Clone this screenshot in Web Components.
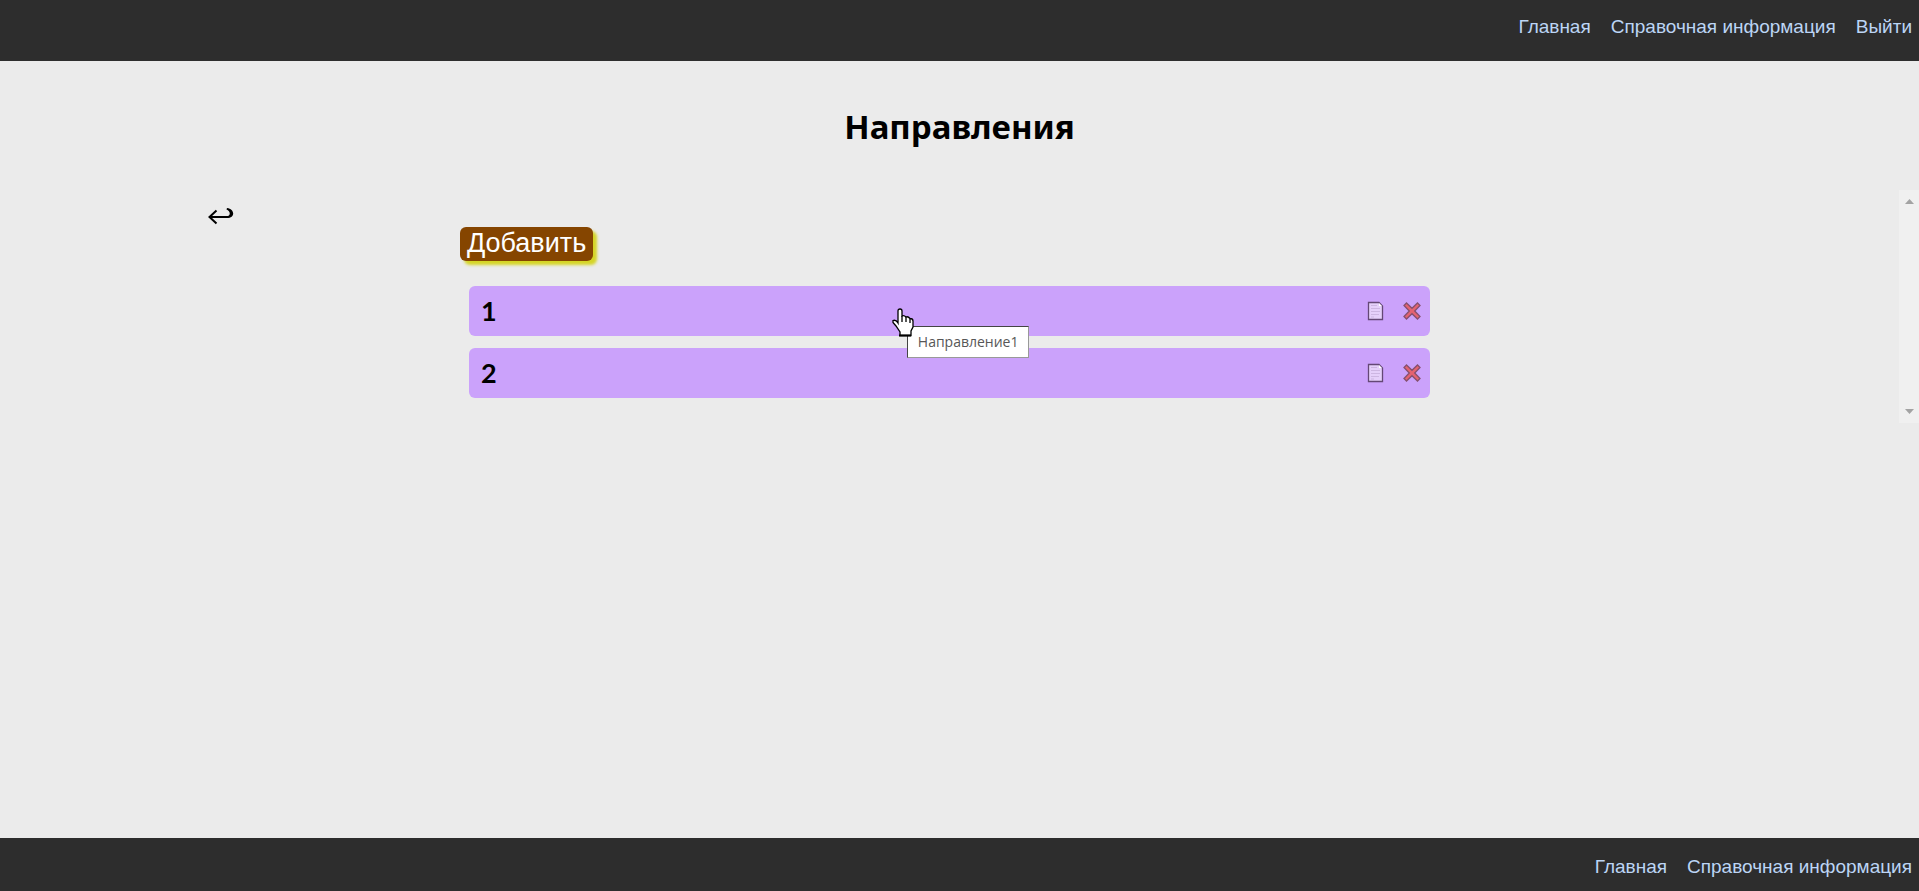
<!DOCTYPE html>
<html lang="ru">
<head>
<meta charset="utf-8">
<title>Направления</title>
<style>
html, body { height: 100%; margin: 0; }
body { background: #ebebeb; font-family: "Liberation Sans", Arial, sans-serif; color: #000; }
</style>
</head>
<body>
<app-page>
  <nav-bar slot="top" label="Основное меню">
    <nav-link href="#home">Главная</nav-link>
    <nav-link href="#help">Справочная информация</nav-link>
    <nav-link href="#exit">Выйти</nav-link>
  </nav-bar>
  <page-title>Направления</page-title>
  <scroll-panel>
    <back-link slot="back"></back-link>
    <add-button>Добавить</add-button>
    <direction-list>
      <direction-row>1<hover-tip slot="tip">Направление1</hover-tip></direction-row>
      <direction-row>2</direction-row>
    </direction-list>
  </scroll-panel>
  <nav-bar slot="bottom" class="bottom" label="Нижнее меню">
    <nav-link href="#home">Главная</nav-link>
    <nav-link href="#help">Справочная информация</nav-link>
  </nav-bar>
</app-page>
<script>
function component(name, html) {
  customElements.define(name, class extends HTMLElement {
    constructor() {
      super();
      this.attachShadow({ mode: 'open' }).innerHTML = html;
    }
    connectedCallback() {
      const link = this.shadowRoot.querySelector('a');
      if (link && this.hasAttribute('href')) link.href = this.getAttribute('href');
      const nav = this.shadowRoot.querySelector('nav');
      if (nav) nav.setAttribute('aria-label', this.getAttribute('label'));
    }
  });
}

component('app-page', `
<style>
  :host { display: flex; flex-direction: column; min-height: 100%; }
  main { flex: 1; }
</style>
<slot name="top"></slot><main><slot></slot></main><slot name="bottom"></slot>`);

component('nav-bar', `
<style>
  :host { display: block; background: #2d2d2d; }
  nav { display: flex; flex-wrap: wrap; justify-content: flex-end; gap: 20px; box-sizing: border-box; min-height: 61px; padding: 16px 7px; }
  :host(.bottom) nav { min-height: 53px; padding: 18px 7px 14px; }
</style>
<nav><slot></slot></nav>`);

component('nav-link', `
<style>
  :host { display: block; }
  a { color: #bcd5f5; text-decoration: none; font-size: 19px; line-height: 21px; display: block; }
</style>
<a href="#"><slot></slot></a>`);

component('page-title', `
<style>
  :host { display: block; text-align: center; }
  h1 { margin: 0; padding: 42px 0 39px; font: bold 33px/48px "Noto Sans", "Open Sans", sans-serif; }
</style>
<h1><slot></slot></h1>`);

component('scroll-panel', `
<style>
  :host { display: flex; }
  .content { flex: 1; display: grid; grid-template-columns: 31fr 66fr 31fr; padding-bottom: 25px; }
  aside { text-align: center; padding: 16px 18px 0 0; }
  .bar { width: 20px; background: #f0f0f0; display: flex; flex-direction: column; align-items: center; justify-content: space-between; padding: 9px 0; box-sizing: border-box; }
  svg { display: block; fill: #a3a3a3; }
</style>
<div class="content"><aside><slot name="back"></slot></aside><section><slot></slot></section></div>
<div class="bar" aria-hidden="true">
  <svg width="9" height="5"><path d="M0 5L4.5 0L9 5z"/></svg>
  <svg width="9" height="5"><path d="M0 0L4.5 5L9 0z"/></svg>
</div>`);

component('back-link', `
<style>
  :host { display: inline-block; }
  a, svg { display: block; }
</style>
<a href="#back" aria-label="Назад"><svg width="26" height="20"><path d="M8.500 4.500L1.500 11L8.500 17.500M1.500 11H20" fill="none" stroke="#000" stroke-width="2"/><path d="M19 2C27 3 27.500 12 19 12V10.500C23 9.500 22.500 5 18.500 3.500z"/></svg></a>`);

component('add-button', `
<style>
  :host { display: block; padding: 37px 0 25px; }
  button { display: block; border: 0; border-radius: 6px; background: #854500; color: #fff; box-shadow: 4px 4px 3px #d5d526; font: 27px/30px "Liberation Sans", Arial, sans-serif; padding: 1px 7px 3px; }
</style>
<button type="button"><slot></slot></button>`);

component('direction-list', `
<style>
  :host { display: grid; gap: 12px; padding: 0 9px; }
</style>
<slot></slot>`);

component('direction-row', `
<style>
  :host { display: flex; align-items: center; position: relative; min-height: 50px; box-sizing: border-box; background: #cba2fb; border-radius: 6px; padding: 0 8px 0 12px; font: bold 27px/48px Lato, "Noto Sans", sans-serif; }
  .name { flex: 1; }
  .actions { display: flex; gap: 16px; }
  button { display: block; border: 0; padding: 0; background: none; }
  svg { display: block; }
  ::slotted(hover-tip) { position: absolute; left: 44%; top: 22px; z-index: 2; }
</style>
<span class="name"><slot></slot></span>
<span class="actions">
  <button type="button" aria-label="Изменить"><svg width="20" height="20"><path d="M2.500 1.500H13L16.500 5V18.500H2.500z" fill="#e5d0fa" stroke="#644875" stroke-width="1.300"/><path d="M13 2L16 5H13z" fill="#fff"/><path d="M5 4.500H11M5 7.500H14M5 10.500H14M5 13.500H13M5 16H8" stroke="#cdb6e2" fill="none"/></svg></button>
  <button type="button" aria-label="Удалить"><svg width="20" height="20"><path d="M4.500 2L10 7.300L15.500 2L18 4.500L12.700 10L18 15.500L15.500 18L10 12.700L4.500 18L2 15.500L7.300 10L2 4.500z" fill="#e46370" stroke="#85506f" stroke-width="1.300"/></svg></button>
</span>
<slot name="tip"></slot>`);

component('hover-tip', `
<style>
  :host { display: grid; padding: 18px 0 0 15px; }
  svg { position: absolute; left: 0; top: 0; }
  .tip { border: 1px solid #444; border-right-color: #999; border-bottom-color: #999; background: #fff; color: #575757; font: 14px/30px "Open Sans", "Noto Sans", sans-serif; padding: 0 10px; }
</style>
<div class="tip" role="tooltip"><slot></slot></div>
<svg width="22" height="30" aria-hidden="true"><path d="M6 15V3Q6 1 8 1Q10 1 10 3V8Q12 7 14 9Q16 8 18 10.500Q21 10.500 21 13V19L19 23V27.500H8V24L4 18L1 14.500V12.500Q4 11.500 6 15z" fill="#fff" stroke="#000" stroke-width="1.300"/><path d="M10 8V14M14 9V14M18 11V15" stroke="#000" stroke-width="1.300"/><path d="M7 27.500H19" stroke="#000" stroke-width="2"/></svg>`);
</script>
</body>
</html>
